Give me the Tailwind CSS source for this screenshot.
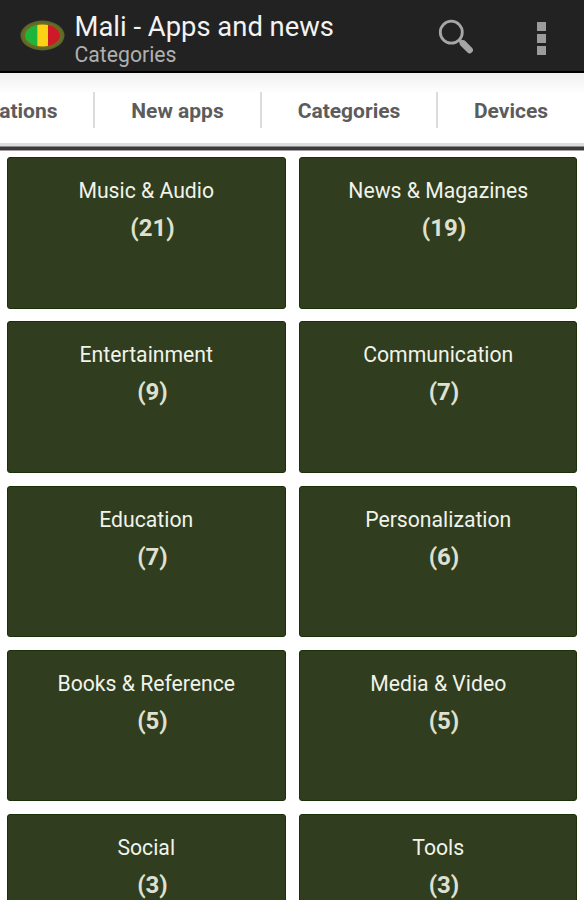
<!DOCTYPE html>
<html lang="en">
<head>
    <meta charset="UTF-8">
    <meta name="viewport" content="width=device-width, initial-scale=1.0">
    <title>Mali - Apps and news</title>
    <script src="https://cdn.jsdelivr.net/npm/@tailwindcss/browser@4"></script>
</head>
<body class="h-screen overflow-hidden bg-white font-['Roboto',sans-serif]">

    <!-- Action bar -->
    <header class="flex h-[73px] items-start border-b-2 border-black bg-[#222222] pl-5">
        <svg class="mt-[20px] h-[32px] w-[45px] shrink-0" viewBox="0 0 45 32">
            <defs>
                <clipPath id="flag"><ellipse cx="22.5" cy="15.5" rx="17.5" ry="11"/></clipPath>
            </defs>
            <ellipse cx="22.5" cy="15.5" rx="22" ry="15" fill="#59682a"/>
            <ellipse cx="22.5" cy="15.5" rx="19.8" ry="13" fill="#6f6a22"/>
            <g clip-path="url(#flag)">
                <rect x="3" y="3" width="14.5" height="26" fill="#1fb53a"/>
                <rect x="17.3" y="3" width="10.7" height="26" fill="#fcd116"/>
                <rect x="28" y="3" width="14" height="26" fill="#ce1a26"/>
            </g>
        </svg>
        <div class="ml-[9.5px] flex-1 pt-[11px]">
            <h1 class="text-[27.4px] leading-[32px] whitespace-nowrap text-[#f3f3f3]">Mali - Apps and news</h1>
            <p class="text-[21.2px] leading-[24px] text-[#b0b0b0]">Categories</p>
        </div>
        <svg class="mt-[18px] mr-[61px] h-[38px] w-[38px] shrink-0" viewBox="0 0 38 38">
            <circle cx="13.3" cy="14.2" r="11" fill="none" stroke="#a6a6a6" stroke-width="2.8"/>
            <path d="M20.8 21.5L24.5 25" stroke="#a6a6a6" stroke-width="3.4"/>
            <path d="M25 25.4L31.6 32" stroke="#a6a6a6" stroke-width="6.6" stroke-linecap="round"/>
        </svg>
        <div class="mt-[21.5px] mr-[38px] flex flex-col gap-[3px]">
            <span class="size-[9px] bg-[#9c9c9c]"></span>
            <span class="size-[9px] bg-[#9c9c9c]"></span>
            <span class="size-[9px] bg-[#9c9c9c]"></span>
        </div>
    </header>

    <!-- Tabs, scrolled part way -->
    <nav class="flex h-[70px] justify-end overflow-hidden bg-linear-to-b from-[#f0f0f0] to-white to-30% pt-[19px] text-[21px] leading-[39px] font-bold whitespace-nowrap text-[#5c5c5c]">
        <a class="flex h-[36px] w-[172px] shrink-0 justify-end border-r-2 border-[#dcdcdc] pr-[35.5px]">Recommendations</a>
        <a class="h-[36px] w-[167px] shrink-0 border-r-2 border-[#dcdcdc] text-center">New apps</a>
        <a class="h-[36px] w-[176px] shrink-0 border-r-2 border-[#dcdcdc] text-center">Categories</a>
        <a class="h-[36px] w-[146px] shrink-0 text-center">Devices</a>
    </nav>
    <div class="h-[4px] border-b border-[#8a8a8a] bg-[#dcdcdc]"></div>
    <div class="h-[4px] border-b border-[#a39fa3] bg-[#3a3a3a]"></div>

    <!-- Category cards -->
    <main class="grid auto-rows-[151.5px] grid-cols-2 gap-x-[13px] gap-y-[12.8px] px-[7px] pt-[6px] text-center">
        <section class="rounded-[3px] border border-[#1a3008] bg-[#303d1f] pt-[18px]">
            <h2 class="text-[21.2px] leading-[30px] text-[#f0f3ea]">Music &amp; Audio</h2>
            <p class="pt-[6px] pl-[12.5px] text-[24px] leading-[32px] font-bold text-[#dfe0d0]">(21)</p>
        </section>
        <section class="rounded-[3px] border border-[#1a3008] bg-[#303d1f] pt-[18px]">
            <h2 class="pl-px text-[21.2px] leading-[30px] text-[#f0f3ea]">News &amp; Magazines</h2>
            <p class="pt-[6px] pl-[12.5px] text-[24px] leading-[32px] font-bold text-[#dfe0d0]">(19)</p>
        </section>
        <section class="rounded-[3px] border border-[#1a3008] bg-[#303d1f] pt-[18px]">
            <h2 class="text-[21.2px] leading-[30px] text-[#f0f3ea]">Entertainment</h2>
            <p class="pt-[6px] pl-[12.5px] text-[24px] leading-[32px] font-bold text-[#dfe0d0]">(9)</p>
        </section>
        <section class="rounded-[3px] border border-[#1a3008] bg-[#303d1f] pt-[18px]">
            <h2 class="pl-px text-[21.2px] leading-[30px] text-[#f0f3ea]">Communication</h2>
            <p class="pt-[6px] pl-[12.5px] text-[24px] leading-[32px] font-bold text-[#dfe0d0]">(7)</p>
        </section>
        <section class="rounded-[3px] border border-[#1a3008] bg-[#303d1f] pt-[18px]">
            <h2 class="text-[21.2px] leading-[30px] text-[#f0f3ea]">Education</h2>
            <p class="pt-[6px] pl-[12.5px] text-[24px] leading-[32px] font-bold text-[#dfe0d0]">(7)</p>
        </section>
        <section class="rounded-[3px] border border-[#1a3008] bg-[#303d1f] pt-[18px]">
            <h2 class="pl-px text-[21.2px] leading-[30px] text-[#f0f3ea]">Personalization</h2>
            <p class="pt-[6px] pl-[12.5px] text-[24px] leading-[32px] font-bold text-[#dfe0d0]">(6)</p>
        </section>
        <section class="rounded-[3px] border border-[#1a3008] bg-[#303d1f] pt-[18px]">
            <h2 class="text-[21.2px] leading-[30px] text-[#f0f3ea]">Books &amp; Reference</h2>
            <p class="pt-[6px] pl-[12.5px] text-[24px] leading-[32px] font-bold text-[#dfe0d0]">(5)</p>
        </section>
        <section class="rounded-[3px] border border-[#1a3008] bg-[#303d1f] pt-[18px]">
            <h2 class="pl-px text-[21.2px] leading-[30px] text-[#f0f3ea]">Media &amp; Video</h2>
            <p class="pt-[6px] pl-[12.5px] text-[24px] leading-[32px] font-bold text-[#dfe0d0]">(5)</p>
        </section>
        <section class="rounded-[3px] border border-[#1a3008] bg-[#303d1f] pt-[18px]">
            <h2 class="text-[21.2px] leading-[30px] text-[#f0f3ea]">Social</h2>
            <p class="pt-[6px] pl-[12.5px] text-[24px] leading-[32px] font-bold text-[#dfe0d0]">(3)</p>
        </section>
        <section class="rounded-[3px] border border-[#1a3008] bg-[#303d1f] pt-[18px]">
            <h2 class="pl-px text-[21.2px] leading-[30px] text-[#f0f3ea]">Tools</h2>
            <p class="pt-[6px] pl-[12.5px] text-[24px] leading-[32px] font-bold text-[#dfe0d0]">(3)</p>
        </section>
    </main>

</body>
</html>
